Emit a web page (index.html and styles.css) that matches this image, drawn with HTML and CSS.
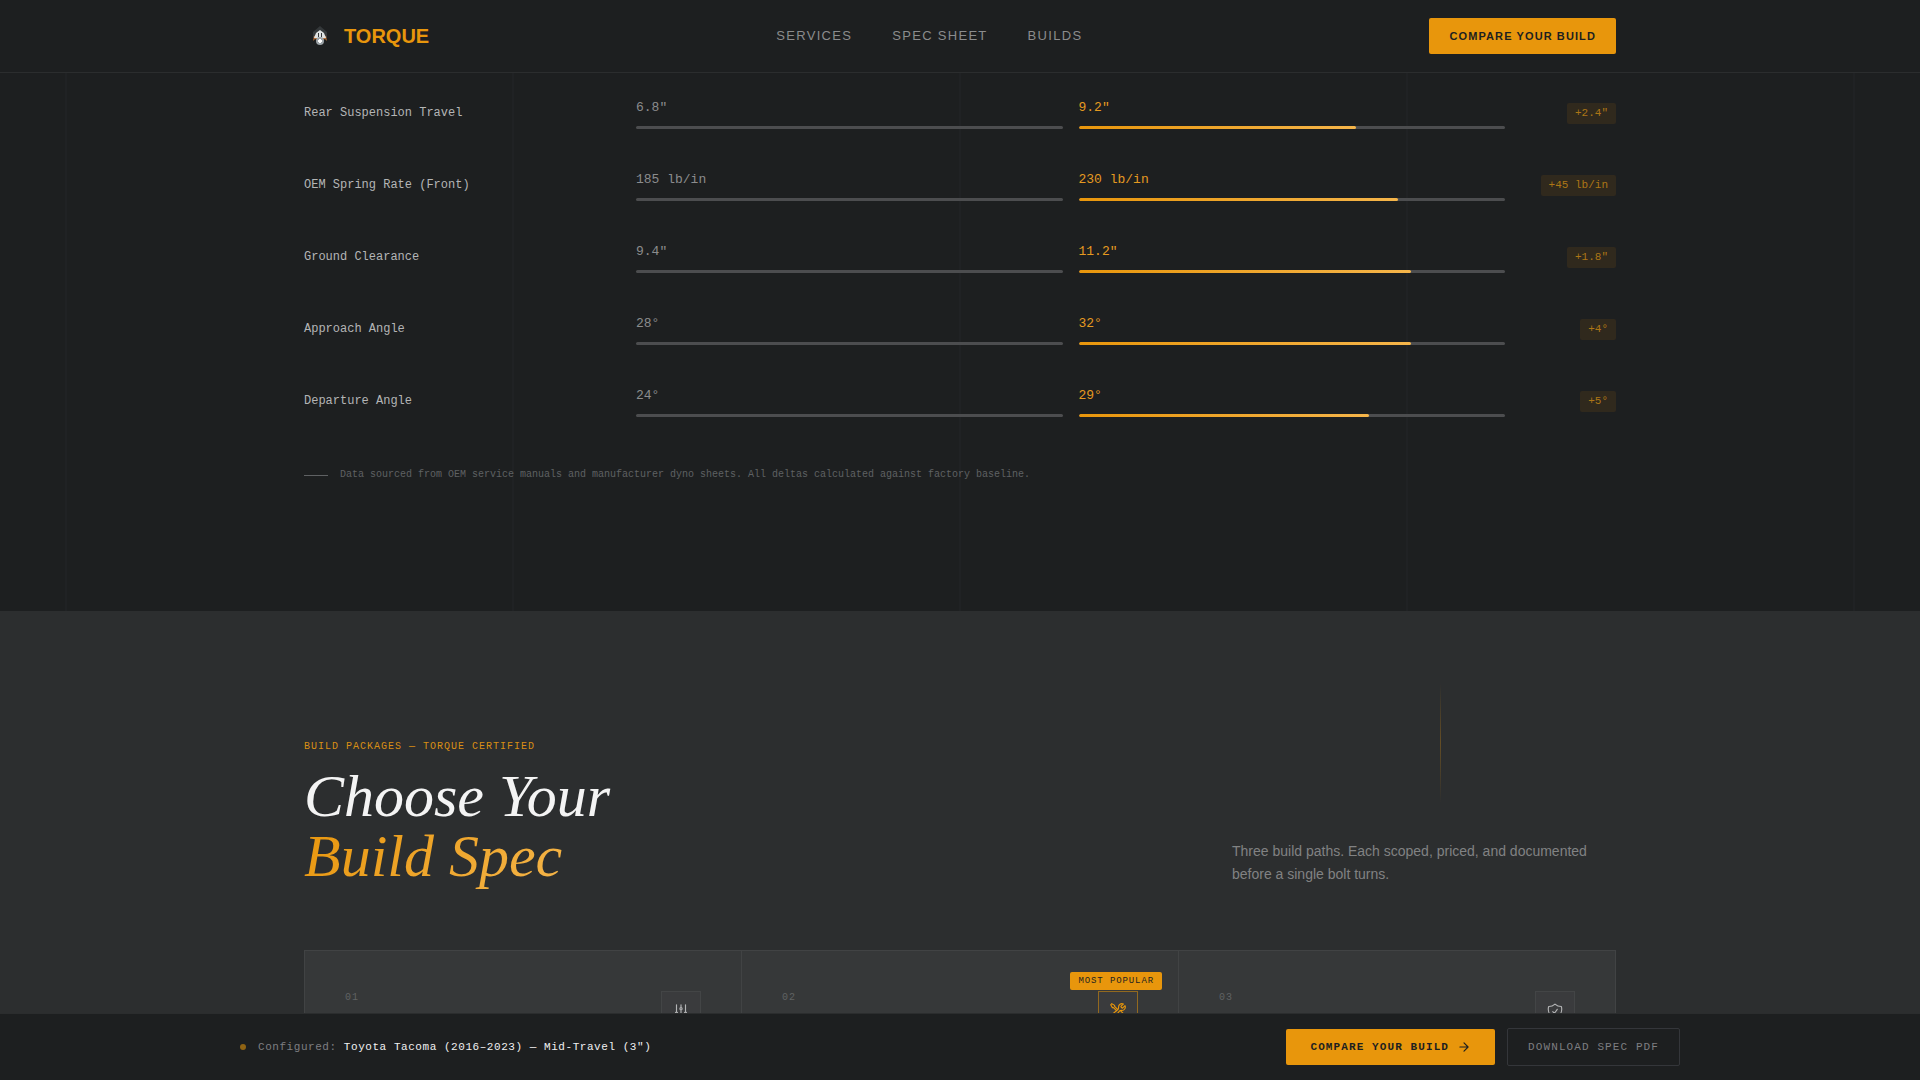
FILE: index.html
```html
<!DOCTYPE html>
<html lang="en">
<head>
<meta charset="utf-8">
<meta name="viewport" content="width=device-width, initial-scale=1">
<title>Torque</title>
<link rel="stylesheet" href="styles.css">
</head>
<body>
<header class="site-header">
  <div class="container header-inner">
    <a class="brand" href="#">
      <svg class="brand-mark" viewBox="0 0 32 32" aria-hidden="true">
        <path d="M16 6l7 6v6H9v-6z" fill="#34383a"/>
        <path d="M9 21l1-5 4-1v5l-3-1z" fill="#b5703a"/>
        <path d="M23 21l-1-5-4-1v5l3-1z" fill="#b5703a"/>
        <path d="M16 10l4 3 2 5h-12l2-5z" fill="#dfe2e2"/>
        <path d="M14 13h1v4h-1zM17 13h1v4h-1z" fill="#34383a"/>
        <circle cx="16" cy="21" r="4" fill="#9ba2a6"/>
        <path d="M15 19h2v1h1v2h-1v1h-2v-1h-1v-2h1z" fill="#fff"/>
      </svg>
      <span>TORQUE</span>
    </a>
    <nav class="site-nav" aria-label="Main">
      <a href="#services">SERVICES</a>
      <a href="#specs">SPEC SHEET</a>
      <a href="#builds">BUILDS</a>
    </nav>
    <button class="btn btn-header" type="button">COMPARE YOUR BUILD</button>
  </div>
</header>

<main class="page">
  <section class="specs" id="specs">
    <div class="container">
      <table class="spec-table" aria-label="Factory and Torque specifications">
        <tbody>
          <tr>
            <th scope="row">Rear Suspension Travel</th>
            <td class="spec-value"><span>6.8"</span><div class="track"></div></td>
            <td class="spec-value upgraded"><span>9.2"</span><div class="track"><div class="fill" style="width:65%"></div></div></td>
            <td class="spec-delta"><span class="delta">+2.4"</span></td>
          </tr>
          <tr>
            <th scope="row">OEM Spring Rate (Front)</th>
            <td class="spec-value"><span>185 lb/in</span><div class="track"></div></td>
            <td class="spec-value upgraded"><span>230 lb/in</span><div class="track"><div class="fill" style="width:75%"></div></div></td>
            <td class="spec-delta"><span class="delta">+45 lb/in</span></td>
          </tr>
          <tr>
            <th scope="row">Ground Clearance</th>
            <td class="spec-value"><span>9.4"</span><div class="track"></div></td>
            <td class="spec-value upgraded"><span>11.2"</span><div class="track"><div class="fill" style="width:78%"></div></div></td>
            <td class="spec-delta"><span class="delta">+1.8"</span></td>
          </tr>
          <tr>
            <th scope="row">Approach Angle</th>
            <td class="spec-value"><span>28°</span><div class="track"></div></td>
            <td class="spec-value upgraded"><span>32°</span><div class="track"><div class="fill" style="width:78%"></div></div></td>
            <td class="spec-delta"><span class="delta">+4°</span></td>
          </tr>
          <tr>
            <th scope="row">Departure Angle</th>
            <td class="spec-value"><span>24°</span><div class="track"></div></td>
            <td class="spec-value upgraded"><span>29°</span><div class="track"><div class="fill" style="width:68%"></div></div></td>
            <td class="spec-delta"><span class="delta">+5°</span></td>
          </tr>
        </tbody>
      </table>
      <p class="source-note">Data sourced from OEM service manuals and manufacturer dyno sheets. All deltas calculated against factory baseline.</p>
    </div>
  </section>

  <section class="builds" id="builds">
    <div class="container">
      <div class="builds-head">
        <div>
          <p class="eyebrow">BUILD PACKAGES — TORQUE CERTIFIED</p>
          <h2 class="builds-title">Choose Your<br><em>Build Spec</em></h2>
        </div>
        <p class="builds-intro">Three build paths. Each scoped, priced, and documented before a single bolt turns.</p>
      </div>
      <div class="cards">
        <article class="card">
          <span class="card-number">01</span>
          <span class="card-icon">
            <svg class="icon" viewBox="0 0 24 24" aria-hidden="true"><path d="M6 13.5V3.75m0 9.75a1.5 1.5 0 0 1 0 3m0-3a1.5 1.5 0 0 0 0 3m0 3.75V16.5m12-3V3.75m0 9.75a1.5 1.5 0 0 1 0 3m0-3a1.5 1.5 0 0 0 0 3m0 3.75V16.5m-6-9V3.75m0 3.75a1.5 1.5 0 0 1 0 3m0-3a1.5 1.5 0 0 0 0 3m0 9.75V10.5"/></svg>
          </span>
        </article>
        <article class="card featured">
          <span class="card-number">02</span>
          <span class="card-icon">
            <svg class="icon" viewBox="0 0 24 24" aria-hidden="true"><path d="M11.42 15.17 17.25 21A2.652 2.652 0 0 0 21 17.25l-5.877-5.877M11.42 15.17l2.496-3.03c.317-.384.74-.626 1.208-.766M11.42 15.17l-4.655 5.653a2.548 2.548 0 1 1-3.586-3.586l6.837-5.63m5.108-.233c.55-.164 1.163-.188 1.743-.14a4.5 4.5 0 0 0 4.486-6.336l-3.276 3.277a3.004 3.004 0 0 1-2.25-2.25l3.276-3.276a4.5 4.5 0 0 0-6.336 4.486c.091 1.076-.071 2.264-.904 2.95l-.102.085m-1.745 1.437L5.909 7.5H4.5L2.25 3.75l1.5-1.5L7.5 4.5v1.409l4.26 4.26m-1.745 1.437 1.745-1.437m6.615 8.206L15.75 15.75M4.867 19.125h.008v.008h-.008v-.008Z"/></svg>
          </span>
          <span class="popular">MOST POPULAR</span>
        </article>
        <article class="card">
          <span class="card-number">03</span>
          <span class="card-icon">
            <svg class="icon" viewBox="0 0 24 24" aria-hidden="true"><path d="M9 12.75 11.25 15 15 9.75m-3-7.036A11.959 11.959 0 0 1 3.598 6 11.99 11.99 0 0 0 3 9.749c0 5.592 3.824 10.29 9 11.623 5.176-1.332 9-6.03 9-11.622 0-1.31-.21-2.571-.598-3.751h-.152c-3.196 0-6.1-1.248-8.25-3.285Z"/></svg>
          </span>
        </article>
      </div>
    </div>
  </section>
</main>

<aside class="build-bar" aria-label="Your build">
  <div class="bar-inner">
    <p class="bar-status"><span class="dot"></span><span>Configured: <strong>Toyota Tacoma (2016–2023) — Mid-Travel (3")</strong></span></p>
    <div class="bar-actions">
      <button class="btn btn-primary" type="button">COMPARE YOUR BUILD
        <svg class="arrow" viewBox="0 0 24 24" aria-hidden="true"><path d="M5 12h14M12 5l7 7-7 7"/></svg>
      </button>
      <button class="btn btn-outline" type="button">DOWNLOAD SPEC PDF</button>
    </div>
  </div>
</aside>
</body>
</html>
```
FILE: styles.css
```css
:root {
  --amber: #e8960c;
  --amber-light: #f5b54a;
  --ink: #1d1f20;
  --slate: #2c2e2f;
  --line: #414344;
  --sans: "Liberation Sans", Arial, sans-serif;
  --serif: "Liberation Serif", "Times New Roman", serif;
  --mono: "Liberation Mono", "Courier New", monospace;
}

* {
  box-sizing: border-box;
}

body {
  display: flex;
  flex-direction: column;
  min-height: 100vh;
  margin: 0;
  background: var(--slate);
  color: #f4f4f4;
  font-family: var(--sans);
}

p,
h2 {
  margin: 0;
}

.container {
  width: 100%;
  max-width: 1440px;
  margin: 0 auto;
  padding: 0 64px;
}

.btn {
  border: 0;
  border-radius: 2px;
  background: var(--amber);
  color: var(--ink);
  font-size: 11px;
  font-weight: 700;
  line-height: 16px;
  letter-spacing: 0.1em;
  white-space: nowrap;
  cursor: pointer;
}

/* Header */
.site-header {
  position: sticky;
  top: 0;
  z-index: 10;
  background: var(--ink);
  border-bottom: 1px solid #2b2d2e;
}

.header-inner {
  display: flex;
  align-items: center;
  justify-content: space-between;
  height: 72px;
}

.brand {
  display: flex;
  align-items: center;
  gap: 8px;
  color: var(--amber);
  font-size: 20px;
  font-weight: 700;
  text-decoration: none;
}

.brand-mark {
  width: 32px;
  height: 32px;
}

.site-nav {
  display: flex;
  gap: 40px;
}

.site-nav a {
  color: #8b8c8d;
  font-size: 13px;
  line-height: 16px;
  letter-spacing: 0.1em;
  text-decoration: none;
}

.btn-header {
  padding: 10px 20px;
  font-family: var(--sans);
}

/* Spec sheet */
.specs {
  padding: 4px 0 128px;
  background: linear-gradient(90deg, transparent 223px, #242627 223px, #242627 224px, transparent 224px) center top / 447px 100% var(--ink);
}

.spec-table {
  width: 100%;
  border-collapse: collapse;
  table-layout: fixed;
  font-family: var(--mono);
}

.spec-table th {
  width: 332px;
  padding: 0;
  color: #b4b5b6;
  font-size: 12px;
  font-weight: 400;
  line-height: 19px;
  text-align: left;
}

.spec-value {
  padding: 20px 16px 20px 0;
  color: #8b8c8d;
  font-size: 13px;
  line-height: 21px;
}

.spec-value.upgraded {
  color: #e59a20;
}

.track {
  height: 3px;
  margin-top: 8px;
  overflow: hidden;
  border-radius: 2px;
  background: #4c4d4f;
}

.fill {
  height: 100%;
  border-radius: 2px;
  background: linear-gradient(90deg, var(--amber), var(--amber-light));
}

.spec-delta {
  width: 95px;
  padding: 0;
  text-align: right;
}

.delta {
  display: inline-block;
  padding: 2px 8px;
  border-radius: 2px;
  background: #30291d;
  color: #ad7616;
  font-size: 11px;
  line-height: 17px;
  white-space: nowrap;
}

.source-note {
  display: flex;
  align-items: center;
  gap: 12px;
  margin-top: 30px;
  color: #5f6163;
  font-family: var(--mono);
  font-size: 10px;
  line-height: 16px;
}

.source-note::before {
  width: 24px;
  height: 1px;
  background: #5f6163;
  content: "";
}

/* Build packages */
.builds {
  position: relative;
  flex: 1;
  padding-top: 128px;
  background: var(--slate);
}

.builds::before {
  position: absolute;
  top: 72px;
  left: 75%;
  width: 1px;
  height: 120px;
  background: linear-gradient(transparent, var(--amber), transparent);
  opacity: 0.3;
  content: "";
}

.builds-head {
  display: flex;
  align-items: flex-end;
  justify-content: space-between;
}

.eyebrow {
  margin-bottom: 12px;
  color: #d98f14;
  font-family: var(--mono);
  font-size: 10px;
  line-height: 15px;
  letter-spacing: 0.1em;
}

.builds-title {
  font-family: var(--serif);
  font-size: 60px;
  font-style: italic;
  font-weight: 400;
  line-height: 60px;
}

.builds-title em {
  background: linear-gradient(135deg, var(--amber), var(--amber-light));
  background-clip: text;
  -webkit-background-clip: text;
  color: transparent;
}

.builds-intro {
  width: 384px;
  color: #818283;
  font-size: 14px;
  line-height: 23px;
}

.cards {
  display: grid;
  grid-template-columns: repeat(3, 1fr);
  gap: 1px;
  margin-top: 64px;
  border: 1px solid var(--line);
  background: var(--line);
}

.card {
  position: relative;
  display: flex;
  align-items: flex-start;
  justify-content: space-between;
  padding: 40px;
  background: #363839;
}

.card-number {
  color: #606263;
  font-family: var(--mono);
  font-size: 10px;
  line-height: 14px;
  letter-spacing: 0.1em;
}

.card-icon {
  display: flex;
  align-items: center;
  justify-content: center;
  width: 40px;
  height: 40px;
  border: 1px solid #434546;
  background: #3a3b3d;
  color: #b4b5b6;
}

.featured .card-icon {
  border-color: #93691f;
  color: var(--amber);
}

.icon {
  width: 18px;
  height: 18px;
  fill: none;
  stroke: currentColor;
  stroke-width: 1.5;
  stroke-linecap: round;
  stroke-linejoin: round;
}

.popular {
  position: absolute;
  top: 21px;
  right: 16px;
  padding: 2px 8px;
  border-radius: 2px;
  background: var(--amber);
  color: var(--ink);
  font-family: var(--mono);
  font-size: 9px;
  line-height: 14px;
  letter-spacing: 0.1em;
}

/* Bottom bar */
.build-bar {
  position: fixed;
  right: 0;
  bottom: 0;
  left: 0;
  z-index: 20;
  padding: 14px 0;
  border-top: 1px solid #2b2d2e;
  background: var(--ink);
  font-family: var(--mono);
}

.bar-inner {
  display: flex;
  align-items: center;
  justify-content: space-between;
  max-width: 1440px;
  margin: 0 auto;
}

.bar-status {
  display: flex;
  align-items: center;
  gap: 12px;
  color: #7d7e80;
  font-size: 11px;
  line-height: 16px;
  letter-spacing: 0.05em;
}

.bar-status strong {
  color: #f0f0f0;
  font-weight: 400;
}

.dot {
  width: 6px;
  height: 6px;
  border-radius: 50%;
  background: #8f6313;
}

.bar-actions {
  display: flex;
  align-items: center;
  gap: 12px;
}

.bar-actions .btn {
  font-family: var(--mono);
}

.btn-primary {
  display: flex;
  align-items: center;
  gap: 8px;
  padding: 10px 24px;
}

.arrow {
  width: 14px;
  height: 14px;
  fill: none;
  stroke: currentColor;
  stroke-width: 2;
  stroke-linecap: round;
  stroke-linejoin: round;
}

.bar-actions .btn-outline {
  padding: 10px 20px;
  border: 1px solid #34363a;
  background: transparent;
  color: #7d7e80;
  font-weight: 400;
}
```
